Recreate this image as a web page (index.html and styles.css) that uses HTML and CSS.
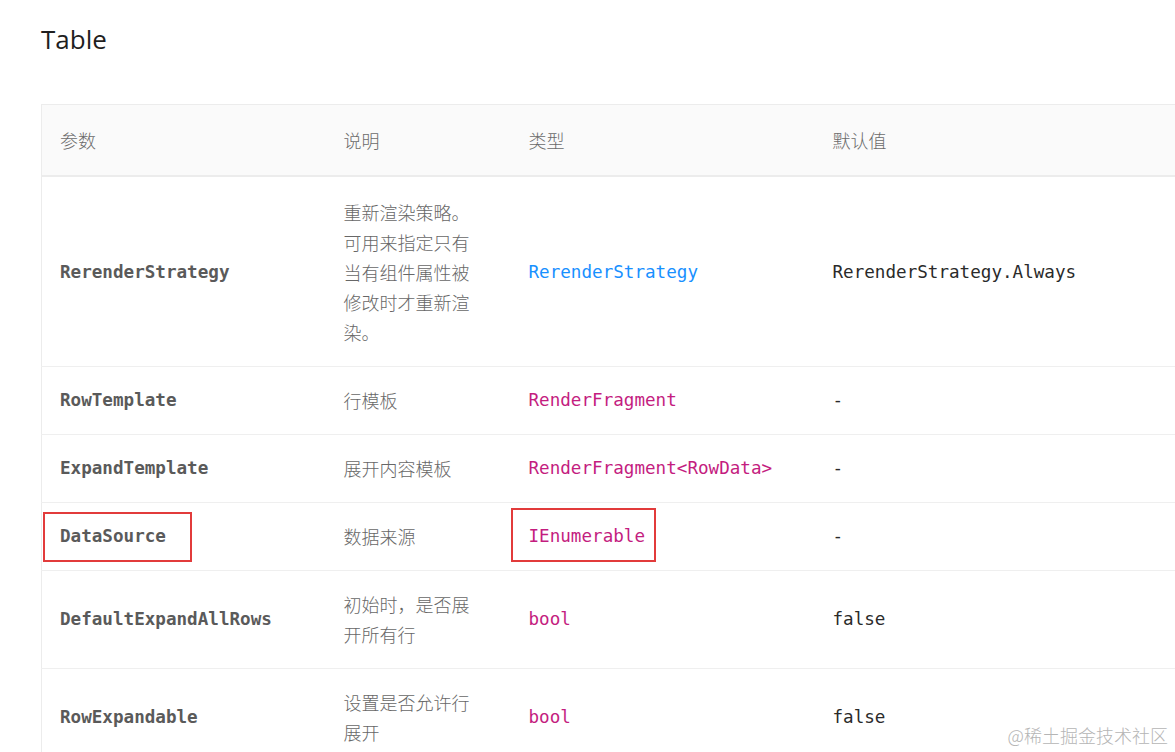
FILE: index.html
```html
<!DOCTYPE html>
<html lang="zh">
<head>
<meta charset="utf-8">
<title>Table</title>
<link rel="stylesheet" href="styles.css">
</head>
<body>
<div class="page">
  <h1 class="title">Table</h1>
  <table class="api">
    <colgroup>
      <col class="c1"><col class="c2"><col class="c3"><col class="c4">
    </colgroup>
    <thead>
      <tr><th>参数</th><th>说明</th><th>类型</th><th>默认值</th></tr>
    </thead>
    <tbody>
      <tr class="tall">
        <td class="param">RerenderStrategy</td>
        <td class="desc">重新渲染策略。可用来指定只有当有组件属性被修改时才重新渲染。</td>
        <td class="type link">RerenderStrategy</td>
        <td class="def">RerenderStrategy.Always</td>
      </tr>
      <tr>
        <td class="param">RowTemplate</td>
        <td class="desc">行模板</td>
        <td class="type">RenderFragment</td>
        <td class="def">-</td>
      </tr>
      <tr>
        <td class="param">ExpandTemplate</td>
        <td class="desc">展开内容模板</td>
        <td class="type">RenderFragment&lt;RowData&gt;</td>
        <td class="def">-</td>
      </tr>
      <tr>
        <td class="param"><span class="marked mark-a">DataSource</span></td>
        <td class="desc">数据来源</td>
        <td class="type"><span class="marked mark-b">IEnumerable</span></td>
        <td class="def">-</td>
      </tr>
      <tr>
        <td class="param">DefaultExpandAllRows</td>
        <td class="desc">初始时，是否展开所有行</td>
        <td class="type">bool</td>
        <td class="def">false</td>
      </tr>
      <tr>
        <td class="param">RowExpandable</td>
        <td class="desc">设置是否允许行展开</td>
        <td class="type">bool</td>
        <td class="def">false</td>
      </tr>
    </tbody>
  </table>
</div>
<div class="watermark">@稀土掘金技术社区</div>
</body>
</html>
```
FILE: styles.css
```css
html, body {
  margin: 0;
  padding: 0;
  background: #ffffff;
  overflow: hidden;
  height: 752px;
}
.page {
  padding: 20px 0 0 41px;
}
.title {
  margin: 0 0 46px 0;
  font-family: "Open Sans", "Noto Sans", sans-serif;
  font-size: 26px;
  line-height: 38px;
  font-weight: 500;
  color: #1f1f1f;
}
.api {
  border-collapse: collapse;
  table-layout: fixed;
  width: 1134px;
  border-left: 1px solid #ececec;
  border-top: 1px solid #ececec;
}
.c1 { width: 284px; }
.c2 { width: 185px; }
.c3 { width: 304px; }
.c4 { width: auto; }
th {
  background: #fafafa;
  text-align: left;
  font-family: "Noto Sans CJK SC", sans-serif;
  font-weight: 300;
  font-size: 18px;
  color: #6b6b6b;
  padding: 0 18px;
  height: 70px;
  border-bottom: 2px solid #ececec;
}
td {
  padding: 18px 18px 19px 18px;
  line-height: 30px;
  vertical-align: middle;
  border-bottom: 1px solid #efefef;
  font-family: "DejaVu Sans Mono", monospace;
  font-size: 17.6px;
}
.tall td { padding-top: 20px; padding-bottom: 19px; }
.param {
  font-weight: bold;
  color: #5a5a5a;
}
.desc {
  font-family: "Noto Sans CJK SC", sans-serif;
  font-weight: 300;
  font-size: 18px;
  color: #676767;
  padding-right: 32px;
}
.type {
  color: #c41d7f;
}
.type.link { color: #1890ff; }
.def {
  color: #2a2a2a;
}
.marked {
  position: relative;
  display: inline-block;
}
.marked::after {
  content: "";
  position: absolute;
  border: 2px solid #e23b3b;
}
.mark-a::after {
  left: -17px;
  right: -26px;
  top: -9px;
  bottom: -11px;
}
.mark-b::after {
  left: -18px;
  right: -11px;
  top: -13px;
  bottom: -11px;
}
.watermark {
  position: absolute;
  right: 7px;
  bottom: 4px;
  font-family: "Noto Sans CJK SC", sans-serif;
  font-weight: 300;
  font-size: 18px;
  color: #b5b5b5;
}
```
